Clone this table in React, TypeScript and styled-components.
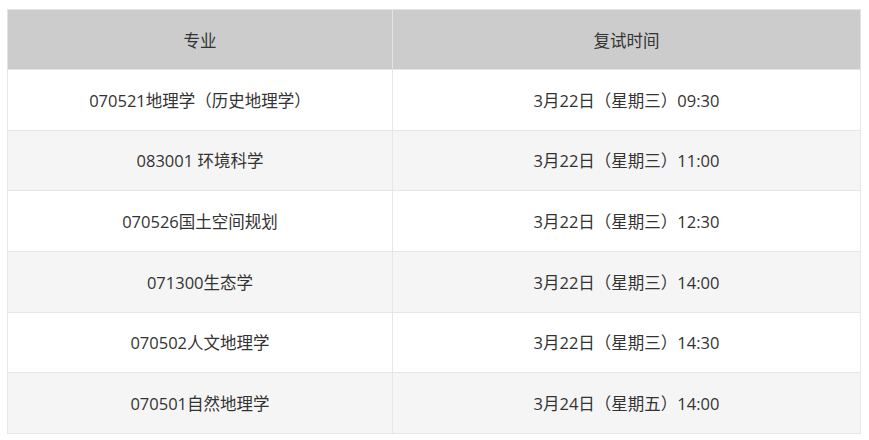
import styled, { createGlobalStyle } from "styled-components";

const GlobalStyle = createGlobalStyle`
  html, body {
    margin: 0;
    padding: 0;
    background: #ffffff;
  }
  body {
    font-family: "Open Sans", "Noto Sans CJK SC", sans-serif;
    color: #333333;
  }
`;

const scheduleData = [
  { major: "070521地理学（历史地理学）", time: "3月22日（星期三）09:30" },
  { major: "083001 环境科学", time: "3月22日（星期三）11:00" },
  { major: "070526国土空间规划", time: "3月22日（星期三）12:30" },
  { major: "071300生态学", time: "3月22日（星期三）14:00" },
  { major: "070502人文地理学", time: "3月22日（星期三）14:30" },
  { major: "070501自然地理学", time: "3月24日（星期五）14:00" },
];

const App = () => {
  return (
    <>
      <GlobalStyle />
      <Page>
        <Table>
          <colgroup>
            <Col $width={385} />
            <col />
          </colgroup>
          <thead>
            <tr>
              <HeadCell>专业</HeadCell>
              <HeadCell>复试时间</HeadCell>
            </tr>
          </thead>
          <tbody>
            {scheduleData.map((row, i) => (
              <Row key={row.major} $striped={i % 2 === 1}>
                <Cell>{row.major}</Cell>
                <Cell>{row.time}</Cell>
              </Row>
            ))}
          </tbody>
        </Table>
      </Page>
    </>
  );
};

export default App;

const Page = styled("div")`
  padding: 9px 8px 0 7px;
`;

const Table = styled("table")`
  width: 854px;
  border-collapse: collapse;
  table-layout: fixed;
  font-size: 16.5px;
`;

const Col = styled("col")<{ $width: number }>`
  width: ${(p) => p.$width}px;
`;

const HeadCell = styled("th")`
  height: 59px;
  padding: 0;
  background: #cccccc;
  border: 1px solid #e3e3e3;
  font-weight: 400;
  text-align: center;
  color: #333333;
`;

const Row = styled("tr")<{ $striped: boolean }>`
  background: ${(p) => (p.$striped ? "#f5f5f5" : "#ffffff")};
`;

const Cell = styled("td")`
  height: 59.67px;
  padding: 0;
  border: 1px solid #e6e6e6;
  text-align: center;
`;
